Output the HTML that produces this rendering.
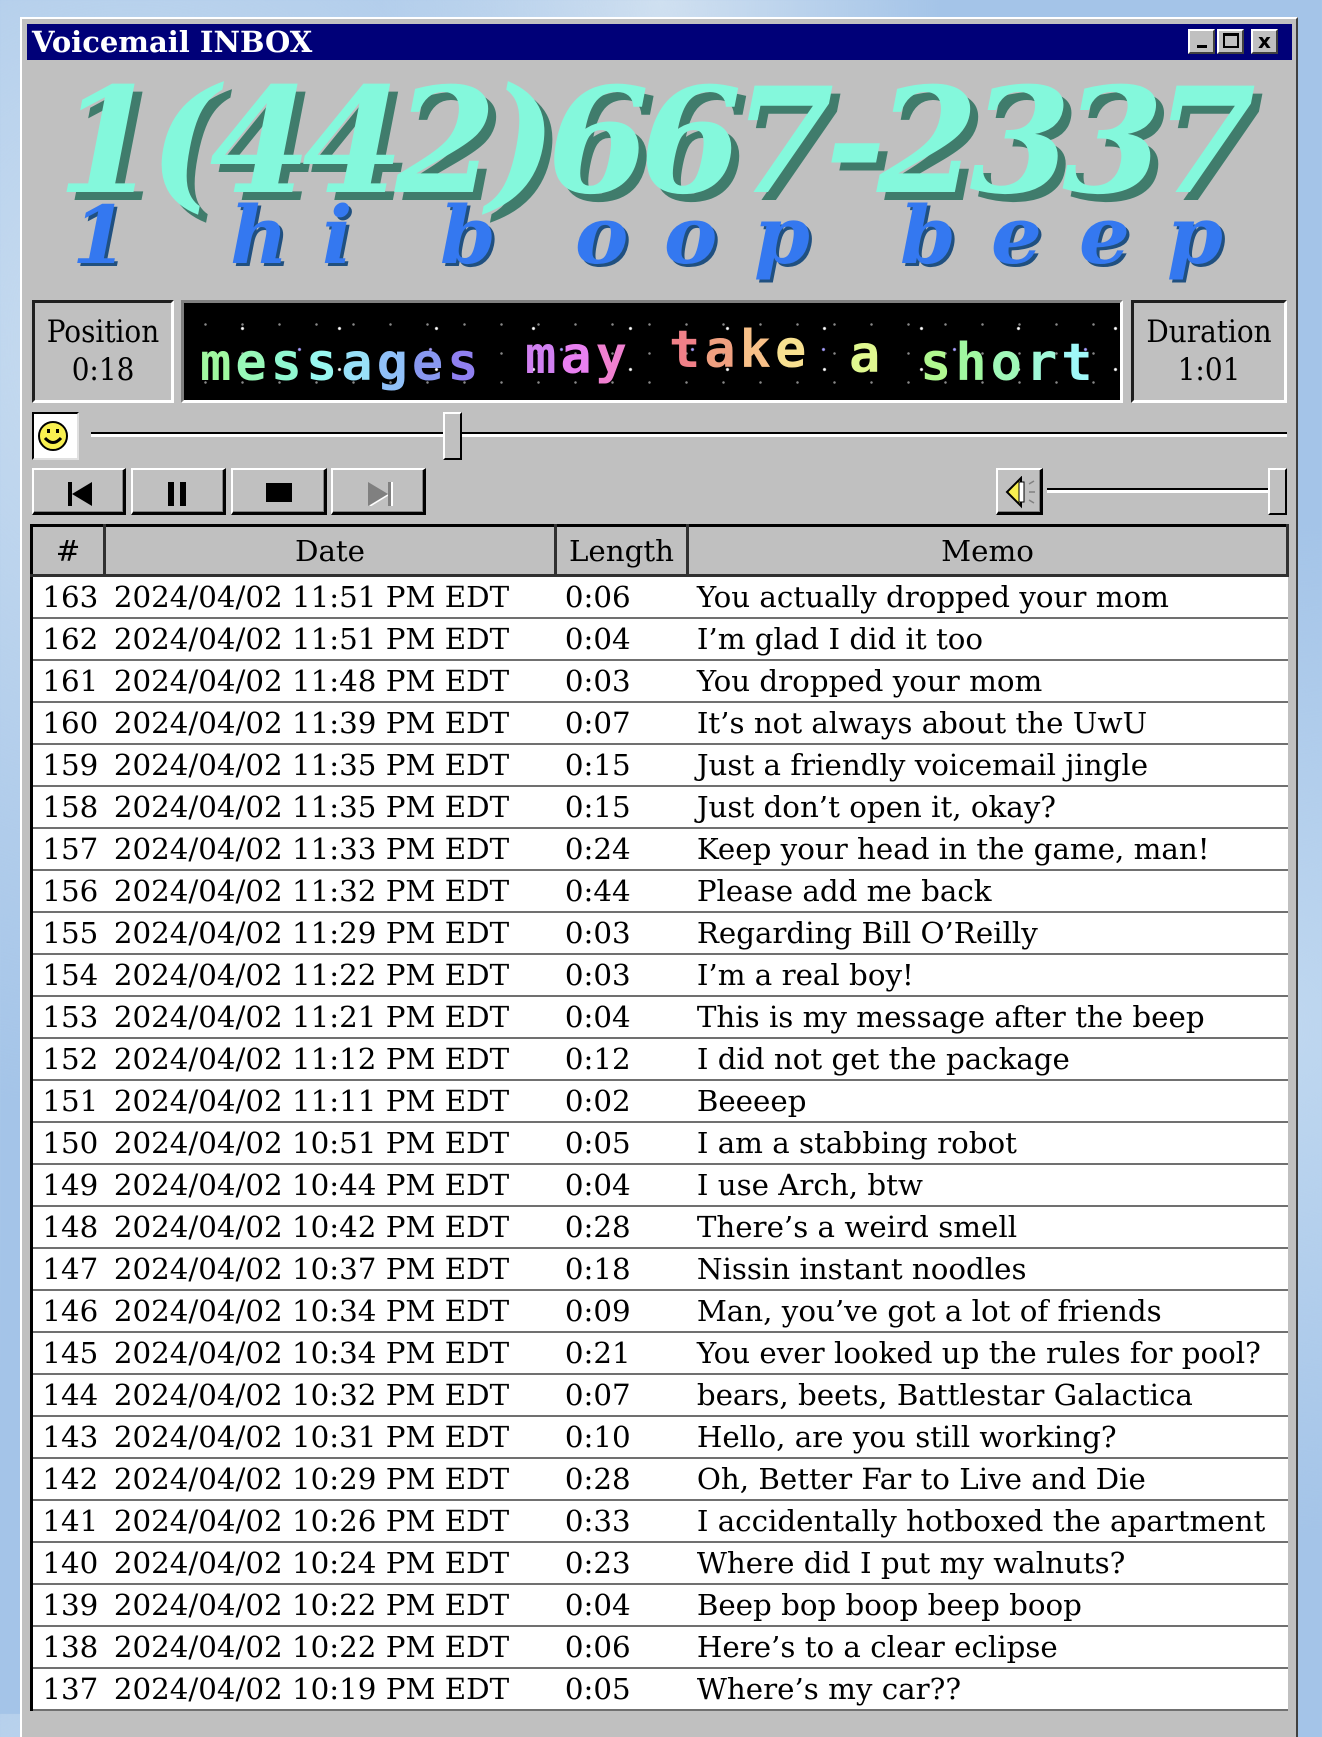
<!DOCTYPE html>
<html><head><meta charset="utf-8"><style>
*{margin:0;padding:0;box-sizing:border-box}
body{width:1322px;height:1714px;overflow:hidden;position:relative;
background:#a4c4e8;background-image:radial-gradient(ellipse at 10% 20%,#c8dcf0 0,transparent 40%),radial-gradient(ellipse at 95% 60%,#c0d8f0 0,transparent 35%),radial-gradient(ellipse at 50% 0%,#d0e0f0 0,transparent 30%);}
.abs{position:absolute}
#win{position:absolute;left:20px;top:17px;width:1278px;height:1720px;background:#c0c0c0;border-top:2px solid #fff;border-left:2px solid #fff;border-right:2px solid #404040;}
#title{position:absolute;left:27px;top:24px;width:1265px;height:36px;background:#000078;color:#fff;font:bold 29px "DejaVu Serif",serif;line-height:36px;padding-left:5px}
.tb{position:absolute;top:29px;width:27px;height:25px;background:#c0c0c0;border-top:2px solid #fff;border-left:2px solid #fff;border-right:2px solid #404040;border-bottom:2px solid #404040}
.phone{position:absolute;left:57px;top:42px;font:italic bold 146px "DejaVu Serif",serif;color:#84f8dc;text-shadow:8px 8px 0 #407c6c;letter-spacing:-9px;white-space:nowrap;line-height:200px}
.bl{position:absolute;top:185px;font:italic bold 80px "DejaVu Serif",serif;color:#3478f0;text-shadow:3px 3px 0 #205080;line-height:100px}
.box{position:absolute;top:300px;height:103px;background:#c0c0c0;border-top:3px solid #202020;border-left:3px solid #202020;border-bottom:3px solid #fff;border-right:3px solid #fff;font:31px "DejaVu Serif Condensed","DejaVu Serif",serif;text-align:center;line-height:38px;padding-top:10px;color:#000}
#mq{position:absolute;left:181px;top:300px;width:942px;height:103px;background:#000;border:3px solid #808080;border-right-color:#fff;border-bottom-color:#fff;overflow:hidden;
background-image:radial-gradient(circle,#fff 0 1px,transparent 2px),radial-gradient(circle,#a8a0ff 0 1px,transparent 2px),radial-gradient(circle,#888 0 1px,transparent 1.5px);background-size:97px 41px,131px 53px,37px 29px;background-position:10px 5px,50px 20px,3px 7px}
.w{position:absolute;font:bold 52px "DejaVu Sans Mono",monospace;letter-spacing:4px;line-height:60px;white-space:nowrap}
.btn{position:absolute;top:468px;height:47px;background:#c0c0c0;border-top:2px solid #fff;border-left:2px solid #fff;border-right:3px solid #000;border-bottom:3px solid #000;box-shadow:inset -1px -1px 0 #808080}
table{position:absolute;left:30px;top:524px;width:1259px;border-collapse:collapse;font:29.3px "DejaVu Serif",serif;border-top:3px solid #000;border-left:3px solid #000}
th{height:50px;background:#c0c0c0;font-weight:normal;border-top:2px solid #fff;border-left:2px solid #fff;border-right:3px solid #303030;border-bottom:3px solid #303030;text-align:center}
td{height:42px;background:#fff;border-bottom:2px solid #707070;white-space:nowrap;line-height:38px;padding:0}
</style></head><body>
<div id="win"></div>
<div id="title">Voicemail INBOX</div>
<div class="tb" style="left:1188px"><div class="abs" style="left:7px;top:14px;width:10px;height:3px;background:#000"></div></div>
<div class="tb" style="left:1217px"><div class="abs" style="left:4px;top:2px;width:16px;height:15px;border:2px solid #000;border-top-width:3px"></div></div>
<div class="tb" style="left:1251px;font:bold 20px 'DejaVu Sans',sans-serif;text-align:center;line-height:20px">x</div>

<div class="phone">1(442)667-2337</div>
<div class="bl" style="left:72px">1</div>
<div class="bl" style="left:230px">h</div>
<div class="bl" style="left:322px">i</div>
<div class="bl" style="left:440px">b</div>
<div class="bl" style="left:575px">o</div>
<div class="bl" style="left:664px">o</div>
<div class="bl" style="left:754px">p</div>
<div class="bl" style="left:900px">b</div>
<div class="bl" style="left:991px">e</div>
<div class="bl" style="left:1079px">e</div>
<div class="bl" style="left:1167px">p</div>

<div class="box" style="left:32px;width:142px">Position<br>0:18</div>
<div class="box" style="left:1131px;width:156px">Duration<br>1:01</div>
<div id="mq">
<div class="w" style="left:16px;top:30px"><span style="color:#a0f8a0">m</span><span style="color:#98f8b8">e</span><span style="color:#90f8d0">s</span><span style="color:#98f8f0">s</span><span style="color:#98e0f8">a</span><span style="color:#90c0f8">g</span><span style="color:#8898f0">e</span><span style="color:#9080f0">s</span></div>
<div class="w" style="left:341px;top:23px"><span style="color:#d080f0">m</span><span style="color:#e880f0">a</span><span style="color:#f080d0">y</span></div>
<div class="w" style="left:485px;top:17px"><span style="color:#f08088">t</span><span style="color:#f0a080">a</span><span style="color:#f8c088">k</span><span style="color:#f8e090">e</span></div>
<div class="w" style="left:665px;top:22px;color:#e0f890">a</div>
<div class="w" style="left:736px;top:30px"><span style="color:#b0f890">s</span><span style="color:#a0f8a0">h</span><span style="color:#a0f8b8">o</span><span style="color:#a0f8d8">r</span><span style="color:#a0f8f8">t</span></div>
</div>

<div class="abs" style="left:32px;top:412px;width:47px;height:48px;background:#fff;border-top:2px solid #000;border-left:2px solid #000;border-right:2px solid #e0e0e0;border-bottom:2px solid #e0e0e0">
<svg width="43" height="44" viewBox="0 0 43 44"><circle cx="19" cy="22" r="14" fill="#f8f050" stroke="#000" stroke-width="2"/><rect x="13" y="15" width="3" height="4"/><rect x="22" y="15" width="3" height="4"/><path d="M11 24 Q19 33 27 24" stroke="#000" stroke-width="3" fill="none"/></svg></div>
<div class="abs" style="left:91px;top:432px;width:1196px;height:2px;background:#000"></div>
<div class="abs" style="left:91px;top:434px;width:1196px;height:3px;background:#fff"></div>
<div class="abs" style="left:443px;top:412px;width:19px;height:48px;background:#c0c0c0;border-top:2px solid #fff;border-left:2px solid #fff;border-right:2px solid #000;border-bottom:2px solid #000"></div>

<div class="btn" style="left:32px;width:94px"><svg class="abs" style="left:34px;top:12px" width="26" height="24"><rect x="0" y="0" width="4" height="24"/><path d="M4 12 L24 0 L24 24 Z"/></svg></div>
<div class="btn" style="left:131px;width:95px"><svg class="abs" style="left:35px;top:12px" width="22" height="24"><rect x="0" y="0" width="6" height="24"/><rect x="12" y="0" width="6" height="24"/></svg></div>
<div class="btn" style="left:231px;width:96px"><svg class="abs" style="left:33px;top:13px" width="28" height="20"><rect width="26" height="19"/></svg></div>
<div class="btn" style="left:331px;width:95px"><svg class="abs" style="left:35px;top:12px" width="26" height="24"><path d="M0 0 L20 12 L0 24 Z" fill="#808080"/><path d="M2 24 L20 13" stroke="#fff" stroke-width="1.5"/><rect x="20" y="0" width="3" height="24" fill="#808080"/><rect x="23" y="0" width="2" height="24" fill="#fff"/></svg></div>

<div class="btn" style="left:996px;width:47px"><svg class="abs" style="left:5px;top:6px" width="36" height="34"><path d="M18 2 L4 16 L18 30 Z" fill="#f8f050" stroke="#000" stroke-width="2"/><rect x="16" y="6" width="5" height="20" fill="#fff" stroke="#000" stroke-width="1"/><path d="M26 8 L31 5 M26 16 L32 16 M26 24 L31 27" stroke="#808080" stroke-width="1.5"/></svg></div>
<div class="abs" style="left:1047px;top:488px;width:240px;height:2px;background:#000"></div>
<div class="abs" style="left:1047px;top:490px;width:240px;height:3px;background:#fff"></div>
<div class="abs" style="left:1268px;top:468px;width:19px;height:47px;background:#c0c0c0;border-top:2px solid #fff;border-left:2px solid #fff;border-right:2px solid #000;border-bottom:2px solid #000"></div>

<table>
<colgroup><col style="width:73px"><col style="width:451px"><col style="width:132px"><col></colgroup>
<tr><th>#</th><th>Date</th><th>Length</th><th>Memo</th></tr>
<tr><td>&nbsp;163</td><td>&nbsp;2024/04/02 11:51 PM EDT</td><td>&nbsp;0:06</td><td>&nbsp;You actually dropped your mom</td></tr>
<tr><td>&nbsp;162</td><td>&nbsp;2024/04/02 11:51 PM EDT</td><td>&nbsp;0:04</td><td>&nbsp;I’m glad I did it too</td></tr>
<tr><td>&nbsp;161</td><td>&nbsp;2024/04/02 11:48 PM EDT</td><td>&nbsp;0:03</td><td>&nbsp;You dropped your mom</td></tr>
<tr><td>&nbsp;160</td><td>&nbsp;2024/04/02 11:39 PM EDT</td><td>&nbsp;0:07</td><td>&nbsp;It’s not always about the UwU</td></tr>
<tr><td>&nbsp;159</td><td>&nbsp;2024/04/02 11:35 PM EDT</td><td>&nbsp;0:15</td><td>&nbsp;Just a friendly voicemail jingle</td></tr>
<tr><td>&nbsp;158</td><td>&nbsp;2024/04/02 11:35 PM EDT</td><td>&nbsp;0:15</td><td>&nbsp;Just don’t open it, okay?</td></tr>
<tr><td>&nbsp;157</td><td>&nbsp;2024/04/02 11:33 PM EDT</td><td>&nbsp;0:24</td><td>&nbsp;Keep your head in the game, man!</td></tr>
<tr><td>&nbsp;156</td><td>&nbsp;2024/04/02 11:32 PM EDT</td><td>&nbsp;0:44</td><td>&nbsp;Please add me back</td></tr>
<tr><td>&nbsp;155</td><td>&nbsp;2024/04/02 11:29 PM EDT</td><td>&nbsp;0:03</td><td>&nbsp;Regarding Bill O’Reilly</td></tr>
<tr><td>&nbsp;154</td><td>&nbsp;2024/04/02 11:22 PM EDT</td><td>&nbsp;0:03</td><td>&nbsp;I’m a real boy!</td></tr>
<tr><td>&nbsp;153</td><td>&nbsp;2024/04/02 11:21 PM EDT</td><td>&nbsp;0:04</td><td>&nbsp;This is my message after the beep</td></tr>
<tr><td>&nbsp;152</td><td>&nbsp;2024/04/02 11:12 PM EDT</td><td>&nbsp;0:12</td><td>&nbsp;I did not get the package</td></tr>
<tr><td>&nbsp;151</td><td>&nbsp;2024/04/02 11:11 PM EDT</td><td>&nbsp;0:02</td><td>&nbsp;Beeeep</td></tr>
<tr><td>&nbsp;150</td><td>&nbsp;2024/04/02 10:51 PM EDT</td><td>&nbsp;0:05</td><td>&nbsp;I am a stabbing robot</td></tr>
<tr><td>&nbsp;149</td><td>&nbsp;2024/04/02 10:44 PM EDT</td><td>&nbsp;0:04</td><td>&nbsp;I use Arch, btw</td></tr>
<tr><td>&nbsp;148</td><td>&nbsp;2024/04/02 10:42 PM EDT</td><td>&nbsp;0:28</td><td>&nbsp;There’s a weird smell</td></tr>
<tr><td>&nbsp;147</td><td>&nbsp;2024/04/02 10:37 PM EDT</td><td>&nbsp;0:18</td><td>&nbsp;Nissin instant noodles</td></tr>
<tr><td>&nbsp;146</td><td>&nbsp;2024/04/02 10:34 PM EDT</td><td>&nbsp;0:09</td><td>&nbsp;Man, you’ve got a lot of friends</td></tr>
<tr><td>&nbsp;145</td><td>&nbsp;2024/04/02 10:34 PM EDT</td><td>&nbsp;0:21</td><td>&nbsp;You ever looked up the rules for pool?</td></tr>
<tr><td>&nbsp;144</td><td>&nbsp;2024/04/02 10:32 PM EDT</td><td>&nbsp;0:07</td><td>&nbsp;bears, beets, Battlestar Galactica</td></tr>
<tr><td>&nbsp;143</td><td>&nbsp;2024/04/02 10:31 PM EDT</td><td>&nbsp;0:10</td><td>&nbsp;Hello, are you still working?</td></tr>
<tr><td>&nbsp;142</td><td>&nbsp;2024/04/02 10:29 PM EDT</td><td>&nbsp;0:28</td><td>&nbsp;Oh, Better Far to Live and Die</td></tr>
<tr><td>&nbsp;141</td><td>&nbsp;2024/04/02 10:26 PM EDT</td><td>&nbsp;0:33</td><td>&nbsp;I accidentally hotboxed the apartment</td></tr>
<tr><td>&nbsp;140</td><td>&nbsp;2024/04/02 10:24 PM EDT</td><td>&nbsp;0:23</td><td>&nbsp;Where did I put my walnuts?</td></tr>
<tr><td>&nbsp;139</td><td>&nbsp;2024/04/02 10:22 PM EDT</td><td>&nbsp;0:04</td><td>&nbsp;Beep bop boop beep boop</td></tr>
<tr><td>&nbsp;138</td><td>&nbsp;2024/04/02 10:22 PM EDT</td><td>&nbsp;0:06</td><td>&nbsp;Here’s to a clear eclipse</td></tr>
<tr><td>&nbsp;137</td><td>&nbsp;2024/04/02 10:19 PM EDT</td><td>&nbsp;0:05</td><td>&nbsp;Where’s my car??</td></tr>
</table>
</body></html>
